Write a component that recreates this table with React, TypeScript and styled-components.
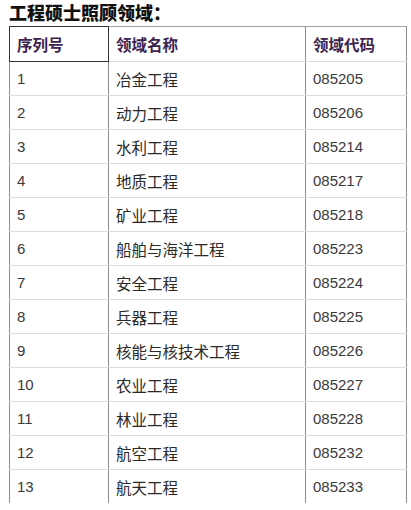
import styled, { createGlobalStyle } from "styled-components";

const GlobalStyle = createGlobalStyle`
    body {
        margin: 0;
        background: #ffffff;
        font-family: "Liberation Sans", "Noto Sans CJK SC", sans-serif;
    }
`;

const StyledPage = styled.div`
    padding: 1px 6px 0 9px;
`;

const StyledTitle = styled.h3`
    margin: 0;
    font-size: 18px;
    line-height: 22px;
    font-weight: 900;
    color: #111111;
    font-family: "Noto Sans CJK SC", sans-serif;
`;

const StyledTable = styled.table`
    margin-top: 3px;
    width: 397px;
    border-collapse: collapse;
    table-layout: fixed;

    tbody tr:last-child td {
        border-bottom: none;
    }
`;

const StyledHeadCell = styled.th<{ $first?: boolean }>`
    height: 34px;
    padding: 0 7px;
    text-align: left;
    vertical-align: middle;
    font-size: 15.5px;
    font-weight: bold;
    color: #3d2350;
    border-top: 1px solid ${(p) => (p.$first ? "#333333" : "#a0a0a0")};
    border-bottom: 1px solid ${(p) => (p.$first ? "#333333" : "#dddddd")};
    border-left: 1px solid ${(p) => (p.$first ? "#333333" : "#8c8c8c")};
    border-right: 1px solid ${(p) => (p.$first ? "#333333" : "#8c8c8c")};
`;

const StyledCell = styled.td`
    height: 33px;
    padding: 0 7px;
    text-align: left;
    vertical-align: middle;
    font-size: 15.5px;
    color: #2a2a2a;
    border-top: 1px solid #dddddd;
    border-bottom: 1px solid #dddddd;
    border-left: 1px solid #8c8c8c;
    border-right: 1px solid #8c8c8c;
`;

const StyledCode = styled(StyledCell)`
    font-size: 15px;
    color: #3a3a3a;
`;

const fields = [
    ["1", "冶金工程", "085205"],
    ["2", "动力工程", "085206"],
    ["3", "水利工程", "085214"],
    ["4", "地质工程", "085217"],
    ["5", "矿业工程", "085218"],
    ["6", "船舶与海洋工程", "085223"],
    ["7", "安全工程", "085224"],
    ["8", "兵器工程", "085225"],
    ["9", "核能与核技术工程", "085226"],
    ["10", "农业工程", "085227"],
    ["11", "林业工程", "085228"],
    ["12", "航空工程", "085232"],
    ["13", "航天工程", "085233"],
];

export default function App() {
    return (
        <StyledPage>
            <GlobalStyle />
            <StyledTitle>工程硕士照顾领域：</StyledTitle>
            <StyledTable>
                <colgroup>
                    <col style={{ width: 99 }} />
                    <col style={{ width: 197 }} />
                    <col style={{ width: 101 }} />
                </colgroup>
                <thead>
                    <tr>
                        <StyledHeadCell $first>序列号</StyledHeadCell>
                        <StyledHeadCell>领域名称</StyledHeadCell>
                        <StyledHeadCell>领域代码</StyledHeadCell>
                    </tr>
                </thead>
                <tbody>
                    {fields.map(([no, name, code]) => (
                        <tr key={no}>
                            <StyledCode>{no}</StyledCode>
                            <StyledCell>{name}</StyledCell>
                            <StyledCode>{code}</StyledCode>
                        </tr>
                    ))}
                </tbody>
            </StyledTable>
        </StyledPage>
    );
}
